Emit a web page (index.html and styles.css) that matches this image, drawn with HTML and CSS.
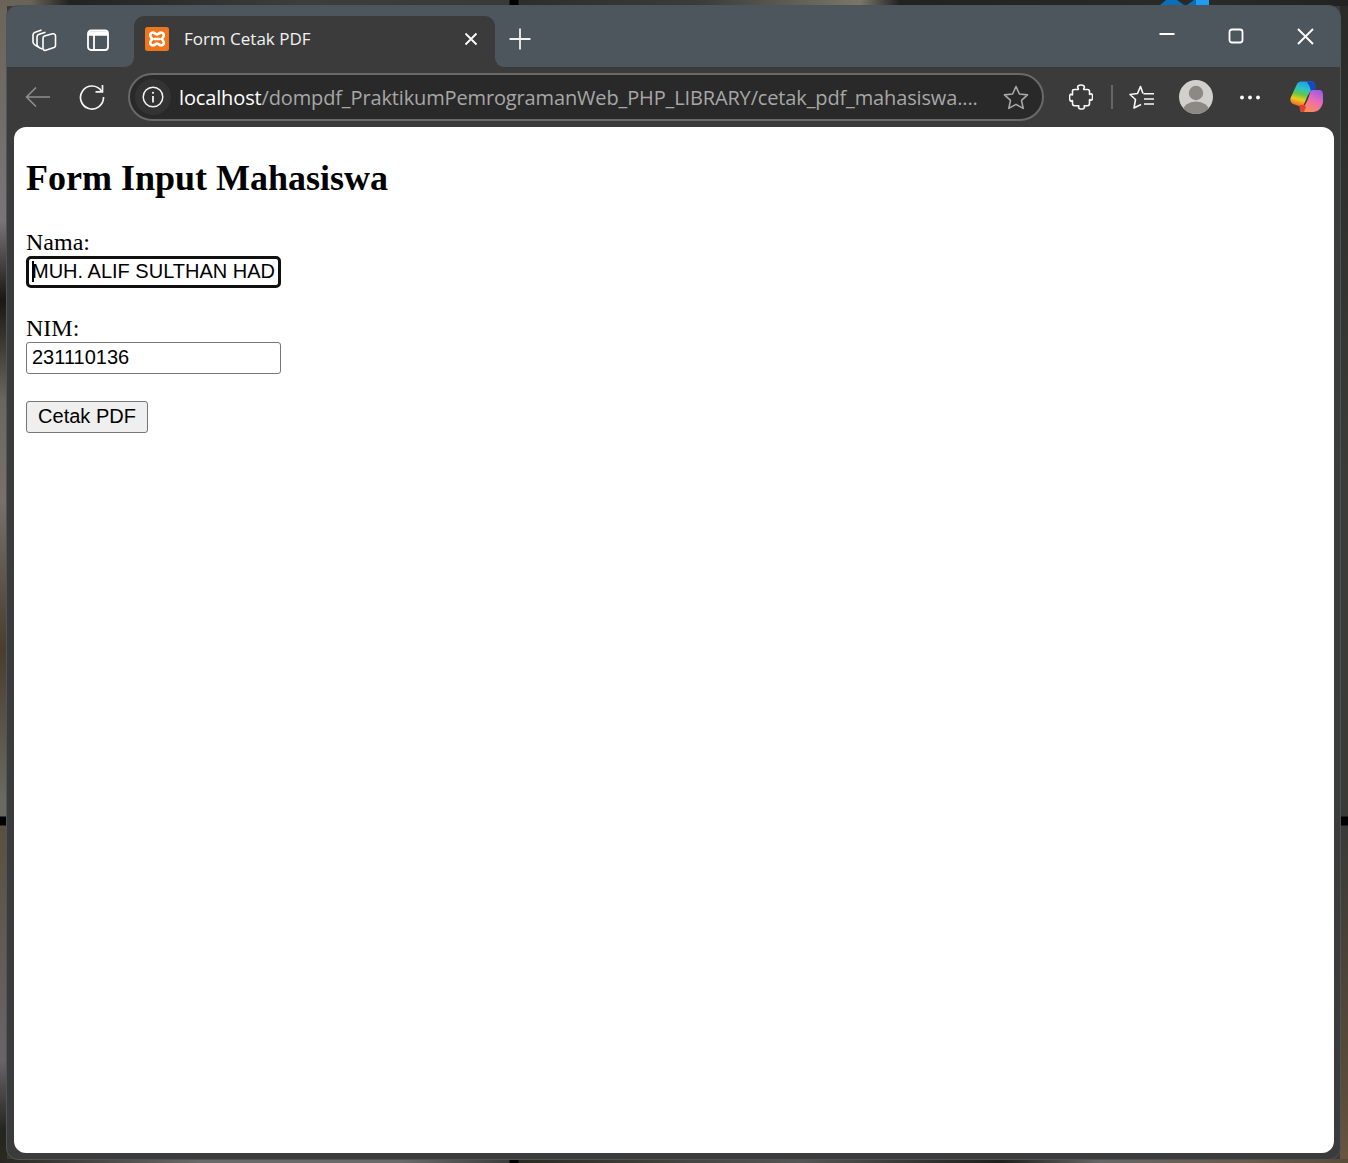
FILE: index.html
```html
<!DOCTYPE html>
<html lang="en">
<head>
    <meta charset="UTF-8">
    <meta name="viewport" content="width=device-width, initial-scale=1.0">
    <title>Form Cetak PDF</title>
    <link rel="stylesheet" href="styles.css">
</head>
<body>
    <!-- bit of the desktop icon sticking out above the window -->
    <svg class="desktop-logo" width="50" height="6" viewBox="0 0 50 6">
        <path d="M0 5 L6 0 H17 L24 5Z" fill="#0a6fb8"/>
        <path d="M27 5 L34 0 H36 V5Z" fill="#0a6fb8"/>
        <path d="M36 0 H49 V5 H36Z" fill="#1f9cf0"/>
    </svg>

    <div class="window">
        <div class="tabstrip">
            <div class="strip-left">
                <span class="strip-btn">
                    <svg width="26" height="26" viewBox="0 0 26 26" fill="none" stroke="#fff" stroke-width="1.6" stroke-linejoin="round">
                        <path d="M8 20 C4 18.5 2 17 2 15 V8 C2 6.5 3 5.6 4.2 5.2 L10.5 3"/>
                        <path d="M11.5 22 C8.5 21 6 19.5 6 17.5 V10 C6 8.5 7 7.7 8.2 7.3 L14.5 5.2"/>
                        <path d="M12 11 C12 10 12.6 9.4 13.5 9.1 L21.5 6.8 C23 6.4 24.5 7.3 24.5 8.8 V18.5 C24.5 19.6 24 20.2 23 20.6 L14.8 23.3 C13.3 23.7 12 22.8 12 21.4Z"/>
                    </svg>
                </span>
                <span class="strip-btn">
                    <svg width="24" height="24" viewBox="0 0 24 24" fill="none" stroke="#fff" stroke-width="1.8">
                        <rect x="2" y="2.5" width="20" height="19.5" rx="3"/>
                        <path d="M2 5.5 H22" stroke-width="4.5"/>
                        <path d="M8 7 V22"/>
                    </svg>
                </span>
            </div>
            <div class="tab-wrap">
                <div class="tab">
                    <svg class="favicon" width="24" height="24" viewBox="0 0 24 24">
                        <rect width="24" height="24" rx="2.5" fill="#f0761d"/>
                        <path d="M6.5 6 C9 4.5 10.5 7.5 12 7.5 C13.5 7.5 15 4.5 17.5 6 C20 7.5 18.5 10.5 16.5 12 C18.5 13.5 20 16.5 17.5 18 C15 19.5 13.5 16.5 12 16.5 C10.5 16.5 9 19.5 6.5 18 C4 16.5 5.5 13.5 7.5 12 C5.5 10.5 4 7.5 6.5 6Z" fill="none" stroke="#fff" stroke-width="2.6"/>
                        <path d="M9 12 H15" stroke="#fff" stroke-width="2.4"/>
                    </svg>
                    <span class="tab-title">Form Cetak PDF</span>
                    <svg class="tab-close" width="14" height="14" viewBox="0 0 14 14" stroke="#fff" stroke-width="1.8">
                        <path d="M1.5 1.5 L12.5 12.5 M12.5 1.5 L1.5 12.5"/>
                    </svg>
                </div>
            </div>
            <div class="strip-right">
                <svg class="new-tab" width="22" height="22" viewBox="0 0 22 22" stroke="#f2f2f2" stroke-width="1.8">
                    <path d="M11 0.5 V21.5 M0.5 11 H21.5"/>
                </svg>
                <div class="win-controls">
                    <span class="win-btn">
                        <svg width="16" height="16" viewBox="0 0 16 16" stroke="#fff" stroke-width="1.8"><path d="M0.5 6 H15.5"/></svg>
                    </span>
                    <span class="win-btn">
                        <svg width="16" height="16" viewBox="0 0 16 16" fill="none" stroke="#fff" stroke-width="1.8"><rect x="1.5" y="1.5" width="13" height="13" rx="2.5"/></svg>
                    </span>
                    <span class="win-btn win-close">
                        <svg width="17" height="17" viewBox="0 0 17 17" stroke="#fff" stroke-width="1.9"><path d="M1 1 L16 16 M16 1 L1 16"/></svg>
                    </span>
                </div>
            </div>
        </div>

        <div class="toolbar">
            <span class="tool-btn">
                <svg width="26" height="22" viewBox="0 0 26 22" fill="none" stroke="#8f8f8f" stroke-width="1.6"><path d="M25 11 H1.5 M11 1.5 L1.5 11 L11 20.5"/></svg>
            </span>
            <span class="tool-btn">
                <svg width="26" height="26" viewBox="0 0 26 26" fill="none" stroke="#f4f4f4" stroke-width="1.7"><path d="M22.5 7 A11.5 11.5 0 1 0 24.5 13"/><path d="M23.5 1 V7.8 H16.5"/></svg>
            </span>
            <div class="address">
                <span class="info-badge">
                    <svg width="22" height="22" viewBox="0 0 22 22" fill="none" stroke="#f2f2f2" stroke-width="1.5"><circle cx="11" cy="11" r="9.8"/><path d="M11 10 V16.5" stroke-width="1.8"/><circle cx="11" cy="6.8" r="1.1" fill="#f2f2f2" stroke="none"/></svg>
                </span>
                <span class="url"><span class="url-host">localhost</span>/dompdf_PraktikumPemrogramanWeb_PHP_LIBRARY/cetak_pdf_mahasiswa....</span>
                <svg class="url-star" width="26" height="25" viewBox="0 0 26 25" fill="none" stroke="#a8a8a8" stroke-width="1.6" stroke-linejoin="round"><path d="M13 1.5 L16.4 9 L24.5 9.9 L18.5 15.4 L20.2 23.4 L13 19.4 L5.8 23.4 L7.5 15.4 L1.5 9.9 L9.6 9Z"/></svg>
            </div>
            <span class="tool-btn ext-btn">
                <svg width="24" height="26" viewBox="0 0 24 26" fill="none" stroke="#f8f8f8" stroke-width="1.6" stroke-linejoin="round"><path d="M3.5 7 C3.5 6 4.5 5.5 5.5 5.5 H9 C9.5 5.5 9.5 4.5 9 4 C8 2.5 9.5 1 12 1 C14.5 1 16 2.5 15 4 C14.5 4.5 14.5 5.5 15 5.5 H18.5 C19.8 5.5 20.5 6.5 20.5 7.5 V10 C20.5 10.5 21 10.5 21.5 10 C23 9.2 23.6 11 23.6 13 C23.6 15 23 16.8 21.5 16 C21 15.5 20.5 15.5 20.5 16 V19.5 C20.5 21 19.5 21.7 18.5 21.7 H15.5 C15 21.7 15 22.2 15.3 22.6 C16 24 14.5 25 12.5 25 C10.5 25 9 24 9.7 22.6 C10 22.2 10 21.7 9.5 21.7 H5.5 C4.3 21.7 3.5 21 3.5 19.5 V17 C3.5 16.5 3 16.5 2.5 17 C1.3 17.8 0.5 15.5 0.5 13.5 C0.5 11.5 1.3 9.7 2.5 10.5 C3 11 3.5 11 3.5 10.5Z"/></svg>
            </span>
            <span class="tool-sep"></span>
            <span class="tool-btn">
                <svg width="26" height="25" viewBox="0 0 26 25" fill="none" stroke="#f8f8f8" stroke-width="1.6" stroke-linejoin="round"><path d="M14 8.5 L11.5 1.5 L8.5 8.5 L1 9.5 L6.5 14.5 L5 23 L12 19.5"/><path d="M14.5 8.7 H25 M15 14 H25 M15 19 H25"/></svg>
            </span>
            <span class="tool-btn">
                <svg width="34" height="34" viewBox="0 0 34 34"><defs><clipPath id="avatarClip"><circle cx="17" cy="17" r="17"/></clipPath></defs><circle cx="17" cy="17" r="17" fill="#d2d0cc"/><g clip-path="url(#avatarClip)" fill="#8c8884"><circle cx="17" cy="13" r="7.2"/><ellipse cx="17" cy="31" rx="13" ry="9.5"/></g></svg>
            </span>
            <span class="tool-btn">
                <svg width="20" height="5" viewBox="0 0 20 5" fill="#fff"><circle cx="2" cy="2.5" r="1.9"/><circle cx="10" cy="2.5" r="1.9"/><circle cx="18" cy="2.5" r="1.9"/></svg>
            </span>
            <span class="tool-btn copilot-btn">
                <svg width="34" height="34" viewBox="0 0 34 34">
                    <defs>
                        <linearGradient id="copA" x1="0.6" y1="0" x2="0.35" y2="1">
                            <stop offset="0" stop-color="#1f9be8"/><stop offset="0.28" stop-color="#2bc2c8"/><stop offset="0.52" stop-color="#62c84a"/><stop offset="0.72" stop-color="#f0c91c"/><stop offset="1" stop-color="#f0552e"/>
                        </linearGradient>
                        <linearGradient id="copB" x1="0.8" y1="0" x2="0.25" y2="1">
                            <stop offset="0" stop-color="#9a5be6"/><stop offset="0.45" stop-color="#ec6cb4"/><stop offset="1" stop-color="#fb9048"/>
                        </linearGradient>
                    </defs>
                    <path d="M8 4 C9 2 11 1.5 14 1.5 H22 C25 1.5 27 4 26 9 L21 12 C19 14 17 20 15 24 C14 27 12 28 10 26 L4 24 C1 22 1 19 2 17Z" fill="url(#copA)"/>
                    <path d="M17 1.5 H22 C25 1.5 27 4 26.5 9 L22 12 C21.5 8 20 3.5 17 1.5Z" fill="#1747c4"/>
                    <path d="M24 10 H30 C33 10 34 12 34 15 V22 C33 28 29 32 24 32 H14 C11 32 10.5 30 12 28 C16 27 19 20 21 13 C21.5 11 22.5 10 24 10Z" fill="url(#copB)"/>
                    <path d="M11 25 H15.5 L17 27 L15 32 H14 C11 32 10 29 11 25Z" fill="#e2402f"/>
                </svg>
            </span>
        </div>

        <div class="page">
            <h2>Form Input Mahasiswa</h2>
            <form>
                <label for="nama">Nama:</label>
                <div class="field">
                    <input type="text" id="nama" class="focused" value="MUH. ALIF SULTHAN HADI">
                    <span class="caret"></span>
                </div>
                <label for="nim">NIM:</label>
                <div class="field">
                    <input type="text" id="nim" value="231110136">
                </div>
                <button type="button">Cetak PDF</button>
            </form>
        </div>
    </div>
</body>
</html>
```

FILE: styles.css
```css
html, body {
    height: 100%;
}

body {
    margin: 0;
    box-sizing: border-box;
    padding: 5px 7px 3px 6px;
    position: relative;
    overflow: hidden;
    background-color: #3a3a38;
    background-repeat: no-repeat;
    background-size: 100% 6px, 100% 4px, 7px 100%, 8px 100%;
    background-position: top left, bottom left, top left, top right;
    background-image:
        linear-gradient(to right, #6a6458 0, #6a6458 30px, #222 70px, #3a3f3c 300px, #383a38 509px, #000 510px, #000 518px, #2c2e2c 519px, #3a3c38 700px, #7a766a 860px, #222 900px, #2a2a28 1200px, #222 100%),
        linear-gradient(to right, #2a2520 0, #6a6a6a 200px, #6a6a6a 400px, #3c3c3c 509px, #000 510px, #000 518px, #2a2a20 519px, #555 800px, #1e1e1a 1000px, #666 1100px, #6a5a48 1250px, #5a4a38 100%),
        linear-gradient(to bottom, #6a6458 0, #7a7478 220px, #1a1812 300px, #6a665f 400px, #77716a 500px, #4a3c30 650px, #6a6a60 800px, #6a6a60 816px, #000 817px, #000 825px, #5a5040 826px, #6a6468 1060px, #252520 1130px, #2a2a20 100%),
        linear-gradient(to bottom, #2a2a28 0, #3c3c38 500px, #3a3a36 816px, #000 817px, #000 825px, #3a3a36 826px, #5c4c3a 1100px, #6a5640 100%);
}

.desktop-logo {
    position: absolute;
    top: 0;
    left: 1160px;
}

.window {
    height: 100%;
    box-sizing: border-box;
    display: flex;
    flex-direction: column;
    background-color: #3b3b3b;
    border: 1px solid #4b555c;
    border-radius: 12px;
    overflow: hidden;
    font-family: "Open Sans", sans-serif;
    color: #f2f2f2;
}

/* tab strip */
.tabstrip {
    display: flex;
    height: 61px;
    flex-shrink: 0;
}

.strip-left {
    width: 127px;
    display: flex;
    align-items: center;
    padding: 6px 0 0 10px;
    box-sizing: border-box;
    background-color: #4d565d;
    border-bottom-right-radius: 9px;
}

.strip-btn {
    width: 54px;
    display: flex;
    justify-content: center;
}

.tab-wrap {
    width: 361px;
    padding-top: 10px;
    box-sizing: border-box;
    background-color: #4d565d;
}

.tab {
    height: 100%;
    display: flex;
    align-items: center;
    padding: 0 17px 5px 11px;
    box-sizing: border-box;
    background-color: #3b3b3b;
    border-radius: 10px 10px 0 0;
}

.tab-title {
    flex: 1;
    margin-left: 15px;
    margin-bottom: 2px;
    font-size: 17px;
}

.strip-right {
    flex: 1;
    display: flex;
    align-items: center;
    justify-content: space-between;
    padding: 4px 0 0 14px;
    background-color: #4d565d;
    border-bottom-left-radius: 9px;
}

.win-controls {
    display: flex;
    margin-top: -4px;
    margin-right: 1px;
}

.win-btn {
    width: 69px;
    display: flex;
    justify-content: center;
}

.win-close {
    padding-left: 2px;
    box-sizing: border-box;
}

/* toolbar */
.toolbar {
    height: 60px;
    flex-shrink: 0;
    display: flex;
    align-items: center;
    padding-left: 4px;
}

.tool-btn {
    width: 54px;
    display: flex;
    justify-content: center;
    flex-shrink: 0;
}

.ext-btn {
    margin-left: 10px;
}

.copilot-btn {
    margin-left: 2px;
}

.tool-sep {
    width: 2px;
    height: 24px;
    margin-left: 3px;
    margin-right: 2px;
    background-color: #666;
}

.address {
    width: 916px;
    height: 48px;
    margin-left: 9px;
    display: flex;
    align-items: center;
    flex-shrink: 0;
    box-sizing: border-box;
    padding: 0 13px 0 5px;
    background-color: #292929;
    border: 2px solid #696969;
    border-radius: 24px;
}

.info-badge {
    width: 36px;
    height: 36px;
    display: flex;
    align-items: center;
    justify-content: center;
    flex-shrink: 0;
    background-color: #333;
    border-radius: 50%;
}

.url {
    flex: 1;
    margin-left: 8px;
    font-size: 20px;
    letter-spacing: -0.14px;
    color: #a7a7a7;
    white-space: nowrap;
}

.url-host {
    color: #fff;
}

/* page content */
.page {
    flex: 1;
    margin: 0 6px 6px 7px;
    padding: 30px 12px 0 12px;
    background-color: #fff;
    border-radius: 12px;
    font-family: "Liberation Serif", serif;
    font-size: 24px;
    color: #000;
}

h2 {
    margin: 0 0 30px 0;
    font-size: 36px;
}

label {
    display: block;
}

.field {
    position: relative;
    width: 255px;
    margin-bottom: 27px;
}

input {
    display: block;
    width: 100%;
    height: 32px;
    box-sizing: border-box;
    margin: 0;
    padding: 0 5px 2px 5px;
    font-family: "Liberation Sans", sans-serif;
    font-size: 20px;
    border: 1px solid #767676;
    border-radius: 3px;
}

input.focused {
    border: 3px solid #101010;
    border-radius: 5px;
    padding: 0 3px 2px 3px;
}

.caret {
    position: absolute;
    top: 5px;
    left: 6px;
    width: 2px;
    height: 21px;
    background-color: #000;
}

button {
    display: block;
    width: 122px;
    height: 32px;
    padding: 0 0 2px 0;
    font-family: "Liberation Sans", sans-serif;
    font-size: 20px;
    background-color: #efefef;
    border: 1px solid #767676;
    border-radius: 3px;
}
```
